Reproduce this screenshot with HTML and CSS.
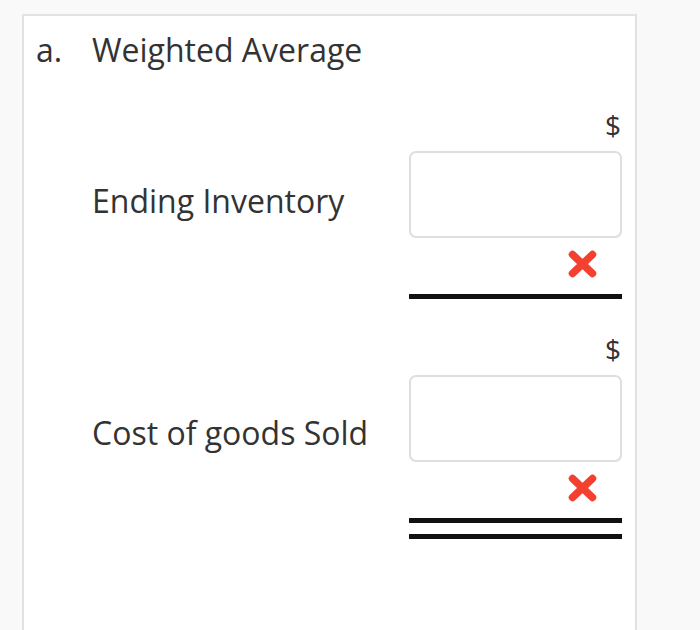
FILE: index.html
```html
<!DOCTYPE html>
<html lang="en">
<head>
<meta charset="utf-8">
<title>Weighted Average</title>
<link rel="stylesheet" href="styles.css">
</head>
<body>
<div class="panel">
  <div class="heading">
    <span class="marker">a.</span>
    <span class="title">Weighted Average</span>
  </div>
  <div class="rows">
    <div class="row">
      <div class="label">Ending Inventory</div>
      <div class="answer">
        <div class="currency">$</div>
        <div class="field"></div>
        <div class="mark">
          <svg width="29" height="28" viewBox="0 0 29 28"><path d="M4.5 4.5 L24.5 23.5 M24.5 4.5 L4.5 23.5" stroke="#f3402f" stroke-width="7.5" stroke-linecap="round" fill="none"/></svg>
        </div>
        <div class="rule single"></div>
      </div>
    </div>
    <div class="row">
      <div class="label">Cost of goods Sold</div>
      <div class="answer">
        <div class="currency">$</div>
        <div class="field"></div>
        <div class="mark">
          <svg width="29" height="28" viewBox="0 0 29 28"><path d="M4.5 4.5 L24.5 23.5 M24.5 4.5 L4.5 23.5" stroke="#f3402f" stroke-width="7.5" stroke-linecap="round" fill="none"/></svg>
        </div>
        <div class="rule double"></div>
      </div>
    </div>
  </div>
</div>
</body>
</html>
```

FILE: styles.css
```css
*, *::before, *::after {
  box-sizing: border-box;
}

html, body {
  margin: 0;
  padding: 0;
  background: #f9f9f9;
  overflow: hidden;
}

body {
  font-family: "Open Sans", "Liberation Sans", sans-serif;
  color: #333;
  padding: 14px 0 0 22px;
  height: 630px;
}

.panel {
  width: 615px;
  height: 616px;
  background: #fff;
  border: 2px solid #e2e2e2;
  border-bottom: none;
  padding: 14px 13px 0 12px;
}

.heading {
  display: flex;
  font-size: 32px;
  line-height: 40px;
}

.marker {
  width: 56px;
}

.rows {
  margin-top: 40px;
  padding-left: 56px;
  display: flex;
  flex-direction: column;
  gap: 35px;
}

.row {
  display: flex;
  align-items: center;
}

.label {
  flex: 1;
  font-size: 32px;
  line-height: 40px;
  margin-bottom: 7px;
}

.answer {
  width: 213px;
  display: flex;
  flex-direction: column;
}

.currency {
  font-size: 28px;
  line-height: 30px;
  height: 30px;
  text-align: right;
  padding-right: 1px;
}

.field {
  margin-top: 11px;
  height: 87px;
  border: 2px solid #dedede;
  border-radius: 7px;
}

.mark {
  margin-top: 12px;
  height: 28px;
  display: flex;
  justify-content: flex-end;
  padding-right: 25px;
}

.mark svg {
  display: block;
}

.rule {
  margin-top: 16px;
}

.rule.single {
  height: 5px;
  background: #111;
}

.rule.double {
  height: 21px;
  border-top: 5px solid #111;
  border-bottom: 5px solid #111;
}
```
